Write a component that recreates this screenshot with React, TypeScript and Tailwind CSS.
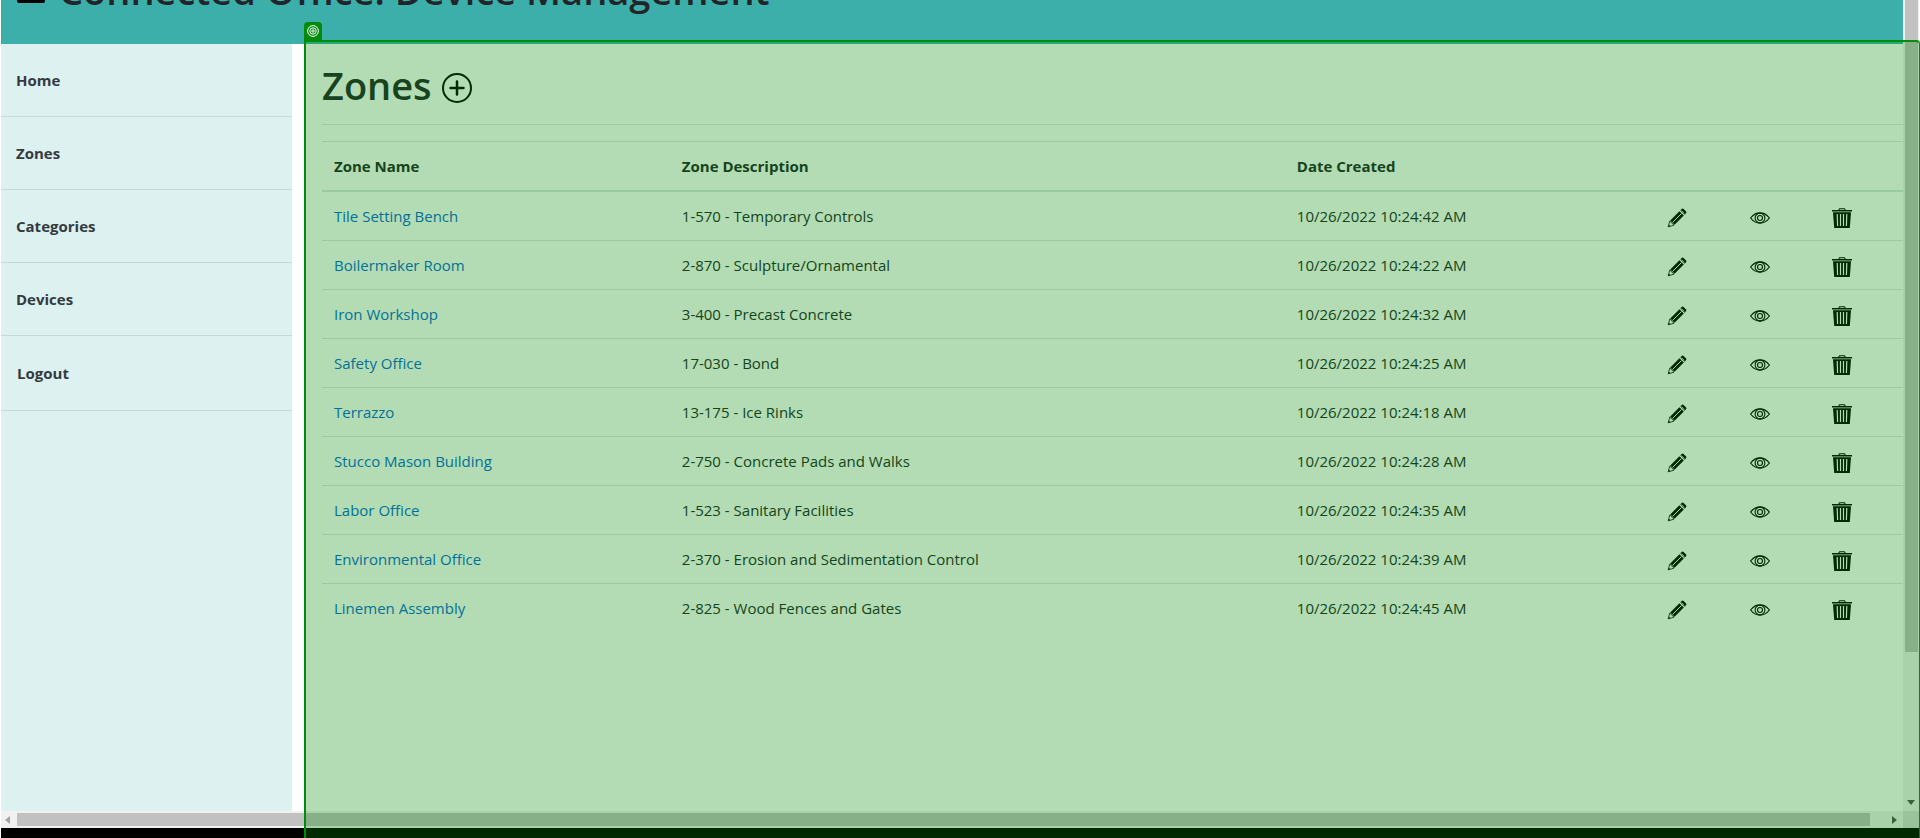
import React from "react";

const zones: [string, string, string][] = [
  ["Tile Setting Bench", "1-570 - Temporary Controls", "10/26/2022 10:24:42 AM"],
  ["Boilermaker Room", "2-870 - Sculpture/Ornamental", "10/26/2022 10:24:22 AM"],
  ["Iron Workshop", "3-400 - Precast Concrete", "10/26/2022 10:24:32 AM"],
  ["Safety Office", "17-030 - Bond", "10/26/2022 10:24:25 AM"],
  ["Terrazzo", "13-175 - Ice Rinks", "10/26/2022 10:24:18 AM"],
  ["Stucco Mason Building", "2-750 - Concrete Pads and Walks", "10/26/2022 10:24:28 AM"],
  ["Labor Office", "1-523 - Sanitary Facilities", "10/26/2022 10:24:35 AM"],
  ["Environmental Office", "2-370 - Erosion and Sedimentation Control", "10/26/2022 10:24:39 AM"],
  ["Linemen Assembly", "2-825 - Wood Fences and Gates", "10/26/2022 10:24:45 AM"],
];

const links = ["Home", "Zones", "Categories", "Devices"];

function Pencil() {
  return (
    <svg width="20" height="20" viewBox="0 0 20 20" aria-hidden="true">
      <path d="M1.2 18.8 2.8 13 7 17.2Z" fill="none" stroke="#000" strokeWidth="0.8" />
      <path d="M1.2 18.8 1.8 16.6 3.4 18.2Z" fill="#000" />
      <path d="M3.2 12.4 12.4 3.2 16.8 7.6 7.6 16.8Z" fill="#000" />
      <path d="M5.6 14.4 14.4 5.6" stroke="#fff" strokeWidth="1" />
      <path d="M13.3 2.3 15 .8q.8-.6 1.6.1l2.5 2.5q.7.8 0 1.6L17.7 6.7Z" fill="#000" />
      <path d="m14.6 2.6 2.8 2.8" stroke="#fff" strokeWidth="0.7" />
    </svg>
  );
}

function Eye() {
  return (
    <svg width="20" height="20" viewBox="0 0 20 20" fill="none" stroke="#000" aria-hidden="true">
      <path d="M.6 10Q4.6 4.8 10 4.8t9.4 5.2Q15.4 15.2 10 15.2T.6 10Z" strokeWidth="1.2" />
      <circle cx="10" cy="10" r="4.9" strokeWidth="1.1" />
      <circle cx="10" cy="10" r="2.5" strokeWidth="1.1" />
    </svg>
  );
}

function Trash() {
  return (
    <svg width="20" height="20" viewBox="0 0 20 20" aria-hidden="true">
      <path d="M0 2h6.200L7.200.2h5.600l1 1.800H20v1.400H0Z" fill="#000" />
      <path d="M7.400 2h5.200l-.4-.8H7.800Z" fill="#fff" />
      <path d="M1 4.200h18L17.800 20H2.200Z" fill="#000" />
      <path d="M5.200 6 5.600 18M8.500 6V18M11.500 6V18M14.800 6 14.400 18" stroke="#fff" strokeWidth="1.200" />
    </svg>
  );
}

export default function App() {
  return (
    <div className="relative flex h-screen flex-col overflow-hidden bg-white pl-px font-['Open_Sans',sans-serif] text-[15px] leading-6 text-[#212529]">
      <div className="flex min-h-0 flex-1 pr-px">
        <div className="flex min-w-0 flex-1 flex-col">
          <header className="flex h-11 shrink-0 items-end overflow-hidden bg-[#3cafaa] pl-4">
            <button aria-label="Toggle menu" className="mb-[41px] flex flex-col gap-1.5">
              <span className="block h-1 w-7 rounded-sm bg-black" />
              <span className="block h-1 w-7 rounded-sm bg-black" />
            </button>
            <h1 className="mb-[30px] ml-3.5 text-[38px] leading-12 font-semibold whitespace-nowrap">Connected Office: Device Management</h1>
          </header>
          <div className="flex min-h-0 flex-1">
            <nav className="w-[291px] shrink-0 bg-[#ddf1f0] font-bold text-[#343a40]">
              {links.map((l) => (
                <a key={l} href="#" className="block border-b border-[#c5d9d8] px-[15px] py-6">{l}</a>
              ))}
              <button className="block w-full border-b border-[#c5d9d8] px-4 py-[25px] text-left">Logout</button>
            </nav>
            <main className="min-w-0 flex-1 pt-[17px] pl-[30px]">
              <div className="flex items-center gap-2.5">
                <h2 className="text-[38px] leading-12 font-semibold">Zones</h2>
                <button aria-label="Add zone" className="mt-1.5">
                  <svg width="30" height="30" viewBox="0 0 30 30" fill="none" stroke="#000" aria-hidden="true">
                    <circle cx="15" cy="15" r="14" strokeWidth="2" />
                    <path d="M15 8.500v13M8.500 15h13" strokeWidth="2.500" strokeLinecap="round" />
                  </svg>
                </button>
              </div>
              <hr className="mt-[15px] mb-4 border-black/10" />
              <table className="w-full table-fixed border-collapse text-left">
                <colgroup>
                  <col className="w-[22%]" />
                  <col className="w-[38.9%]" />
                  <col />
                  <col className="w-[83px]" />
                  <col className="w-[82px]" />
                  <col className="w-[83px]" />
                </colgroup>
                <thead>
                  <tr className="h-[49px] border-t border-b-2 border-[#dee2e6]">
                    <th className="px-3 font-bold">Zone Name</th>
                    <th className="px-3 font-bold">Zone Description</th>
                    <th className="px-3 font-bold">Date Created</th>
                    <th /><th /><th />
                  </tr>
                </thead>
                <tbody>
                  {zones.map(([name, desc, date]) => (
                    <tr key={name} className="h-[49px] border-t border-[#dee2e6] first:h-[50px] first:border-t-2">
                      <td className="px-3"><a href="#" className="text-[#0366d6]">{name}</a></td>
                      <td className="px-3">{desc}</td>
                      <td className="px-3">{date}</td>
                      <td className="px-3"><button aria-label={"Edit " + name} className="mt-1 block"><Pencil /></button></td>
                      <td className="px-3"><button aria-label={"View " + name} className="mt-1 block"><Eye /></button></td>
                      <td className="px-3"><button aria-label={"Delete " + name} className="mt-1 block"><Trash /></button></td>
                    </tr>
                  ))}
                </tbody>
              </table>
            </main>
          </div>
        </div>
        <div className="flex w-4 shrink-0 flex-col items-center justify-between bg-[#f1f1f1] pb-1.5">
          <div className="h-[81%] w-[13px] bg-[#c1c1c1]" />
          <svg width="8" height="5" viewBox="0 0 8 5" aria-hidden="true"><path d="M0 0h8L4 5Z" fill="#505050" /></svg>
        </div>
      </div>
      <div className="mr-px flex h-[17px] shrink-0 items-center bg-[#f1f1f1] pl-1">
        <svg width="5" height="8" viewBox="0 0 5 8" aria-hidden="true"><path d="M5 0v8L0 4Z" fill="#a3a3a3" /></svg>
        <div className="mr-[22px] ml-[7px] h-[13px] flex-1 bg-[#c1c1c1]" />
        <svg width="5" height="8" viewBox="0 0 5 8" aria-hidden="true"><path d="M0 0v8l5-4Z" fill="#505050" /></svg>
        <div className="ml-1.5 h-full w-4 bg-[#dcdcdc]" />
      </div>
      <div className="mr-px h-2.5 shrink-0 bg-black" />

      <div className="pointer-events-none absolute top-10 right-0 bottom-0 left-[304px] rounded-tr-sm border-t-2 border-r border-l-2 border-[#008b0b] bg-[#048a08]/30" />
      <div className="absolute top-[22px] left-[304px] flex size-[18px] items-center justify-center rounded-t bg-[#008b0b]">
        <svg width="12" height="12" viewBox="0 0 12 12" fill="none" stroke="#fff" aria-hidden="true">
          <circle cx="6" cy="6" r="5.4" />
          <circle cx="6" cy="6" r="3.2" />
          <circle cx="6" cy="6" r="1.2" />
        </svg>
      </div>
    </div>
  );
}
